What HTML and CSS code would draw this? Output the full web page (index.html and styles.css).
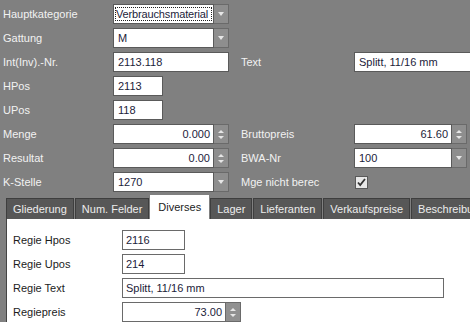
FILE: index.html
```html
<!DOCTYPE html>
<html>
<head>
<meta charset="utf-8">
<link rel="stylesheet" href="styles.css">
</head>
<body>
<div class="form">
  <div class="lbl">Hauptkategorie</div>
  <div class="combo"><div class="field ff"><span class="focus">Verbrauchsmaterial</span></div><div class="btn"><span class="down"></span></div></div>
  <div></div><div></div>

  <div class="lbl">Gattung</div>
  <div class="combo"><div class="field">M</div><div class="btn"><span class="down"></span></div></div>
  <div></div><div></div>

  <div class="lbl">Int(Inv).-Nr.</div>
  <div class="input">2113.118</div>
  <div class="lbl r">Text</div>
  <div class="input open">Splitt, 11/16 mm</div>

  <div class="lbl">HPos</div>
  <div class="input short">2113</div>
  <div></div><div></div>

  <div class="lbl">UPos</div>
  <div class="input short">118</div>
  <div></div><div></div>

  <div class="lbl">Menge</div>
  <div class="combo"><div class="field num">0.000</div><div class="btn spin"><span class="up"></span><span class="down sm"></span></div></div>
  <div class="lbl r">Bruttopreis</div>
  <div class="combo rw"><div class="field num">61.60</div><div class="btn spin"><span class="up"></span><span class="down sm"></span></div></div>

  <div class="lbl">Resultat</div>
  <div class="combo"><div class="field num">0.00</div><div class="btn spin"><span class="up"></span><span class="down sm"></span></div></div>
  <div class="lbl r">BWA-Nr</div>
  <div class="combo rw"><div class="field">100</div><div class="btn"><span class="down"></span></div></div>

  <div class="lbl">K-Stelle</div>
  <div class="combo"><div class="field">1270</div><div class="btn"><span class="down"></span></div></div>
  <div class="lbl r">Mge nicht berec</div>
  <div class="chkcell"><span class="chk"><svg width="11" height="11" viewBox="0 0 11 11"><path d="M2 5.5 L4.2 8 L9 2" fill="none" stroke="#333" stroke-width="1.8"/></svg></span></div>
</div>

<div class="tabs">
  <div class="tab">Gliederung</div>
  <div class="tab">Num. Felder</div>
  <div class="tab sel">Diverses</div>
  <div class="tab">Lager</div>
  <div class="tab">Lieferanten</div>
  <div class="tab">Verkaufspreise</div>
  <div class="tab">Beschreibung</div>
</div>
<div class="panel">
  <div class="plbl">Regie Hpos</div>
  <div class="pinput w62">2116</div>
  <div class="plbl">Regie Upos</div>
  <div class="pinput w62">214</div>
  <div class="plbl">Regie Text</div>
  <div class="pinput wide">Splitt, 11/16 mm</div>
  <div class="plbl">Regiepreis</div>
  <div class="pcombo"><div class="field num">73.00</div><div class="btn spin"><span class="up"></span><span class="down sm"></span></div></div>
</div>
</body>
</html>
```
FILE: styles.css
```css
html, body {
  margin: 0;
  padding: 0;
  background: #808080;
  font-family: "Liberation Sans", Arial, sans-serif;
  font-size: 11px;
  overflow: hidden;
  width: 470px;
  height: 322px;
}
body {
  display: flex;
  flex-direction: column;
}
.form {
  display: grid;
  grid-template-columns: 110px 116px 125px 1fr;
  grid-auto-rows: 20px;
  row-gap: 4px;
  padding: 4px 0 0 3px;
  flex: none;
}
.lbl {
  color: #f2f2f2;
  display: flex;
  align-items: center;
  white-space: nowrap;
}
.lbl.r { padding-left: 12px; }
.input, .field {
  background: #fff;
  color: #1c1c3a;
  display: flex;
  align-items: center;
  padding: 0 4px;
  box-sizing: border-box;
  white-space: nowrap;
  overflow: hidden;
}
.input { border: 1px solid #5a5a5a; }
.input.short { width: 50px; }
.input.open { border-right: none; }
.combo {
  display: flex;
  height: 20px;
}
.combo.rw { width: 113px; }
.combo .field {
  flex: 1;
  border: 1px solid #5a5a5a;
}
.field.ff {
  padding: 2px 1px;
  align-items: stretch;
}
.field.num { justify-content: flex-end; padding-right: 3px; }
.focus {
  flex: 1;
  display: flex;
  align-items: center;
  border: 1px dotted #222;
  padding-left: 0;
  letter-spacing: -0.15px;
  overflow: hidden;
}
.btn {
  width: 15px;
  flex: none;
  background: #8e8e8e;
  border: 1px solid #6a6a6a;
  border-left: none;
  box-sizing: border-box;
  display: flex;
  flex-direction: column;
  align-items: center;
  justify-content: center;
  gap: 3px;
}
.down {
  width: 0; height: 0;
  border-left: 3.5px solid transparent;
  border-right: 3.5px solid transparent;
  border-top: 4px solid #e6e6e6;
}
.down.sm, .up {
  border-left-width: 3px;
  border-right-width: 3px;
}
.down.sm { border-top-width: 3px; }
.up {
  width: 0; height: 0;
  border-left: 3px solid transparent;
  border-right: 3px solid transparent;
  border-bottom: 3px solid #e6e6e6;
}
.chkcell {
  display: flex;
  align-items: center;
  padding-left: 1px;
}
.chk {
  width: 13px;
  height: 13px;
  box-sizing: border-box;
  border: 1px solid #5a5a5a;
  background: #e8e8e8;
  display: flex;
  align-items: center;
  justify-content: center;
}
.chk svg { display: block; }
.tabs {
  display: flex;
  align-items: flex-end;
  margin-top: 3px;
  padding-left: 6px;
  height: 24px;
  white-space: nowrap;
  overflow: hidden;
  flex: none;
}
.tab {
  height: 21px;
  box-sizing: border-box;
  background: #575757;
  color: #ececec;
  border: 1px solid #3e3e3e;
  border-bottom: none;
  margin-right: 1px;
  padding: 0 6px;
  display: flex;
  align-items: center;
  flex: none;
}
.tab.sel {
  height: 24px;
  background: #fff;
  color: #1c1c1c;
  border-color: #fff;
  padding: 0 7px 2px;
}
.panel {
  background: #fff;
  margin-left: 6px;
  border-left: 1px solid #444;
  flex: 1;
  min-height: 0;
  overflow: hidden;
  display: grid;
  grid-template-columns: 109px 1fr;
  grid-auto-rows: 20px;
  row-gap: 4px;
  align-content: start;
  padding: 11px 0 0 6px;
}
.plbl {
  color: #1c1c1c;
  display: flex;
  align-items: center;
}
.pinput {
  border: 1px solid #6a6a6a;
  box-sizing: border-box;
  display: flex;
  align-items: center;
  padding: 0 3px;
  color: #1c1c3a;
}
.pinput.w62 { width: 63px; }
.pinput.wide { width: 322px; }
.pcombo {
  display: flex;
  width: 119px;
  height: 20px;
}
.pcombo .field {
  flex: 1;
  border: 1px solid #6a6a6a;
}
.pcombo .btn {
  background: #909090;
}
```
